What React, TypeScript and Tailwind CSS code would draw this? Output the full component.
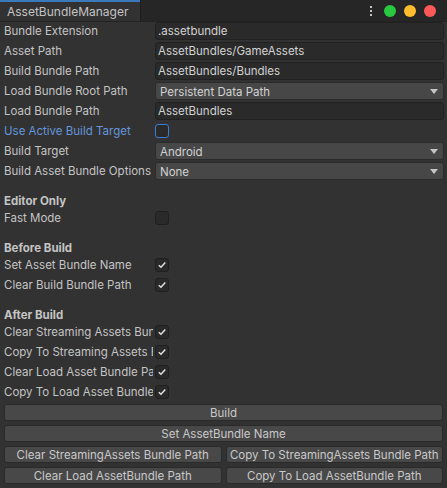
import React from "react";

const labelCls = "w-[149px] mr-[2px] shrink-0 h-[18px] leading-[19px] overflow-hidden whitespace-nowrap text-[#c4c4c4]";

const Check = ({ on, focus }: { on?: boolean; focus?: boolean }) => (
  <div
    className={`w-[14px] h-[14px] mt-[2px] rounded-[3px] border bg-[#2a2a2a] flex items-center justify-center ${
      focus ? "border-[#3c7fd2]" : "border-[#1f1f1f]"
    }`}
  >
    {on && (
      <svg width="10" height="10" viewBox="0 0 10 10">
        <path d="M1.8 5.2 L4 7.3 L8.3 2.6" fill="none" stroke="#e0e0e0" strokeWidth="1.5" />
      </svg>
    )}
  </div>
);

const TextRow = ({ label, value }: { label: string; value: string }) => (
  <div className="flex h-[20px]">
    <div className={labelCls}>{label}</div>
    <div className="flex-1 h-[18px] rounded-[3px] border border-[#212121] bg-[#2a2a2a] px-[2px] leading-[17px] text-[#d2d2d2] whitespace-nowrap overflow-hidden">
      {value}
    </div>
  </div>
);

const DropRow = ({ label, value }: { label: string; value: string }) => (
  <div className="flex h-[20px]">
    <div className={labelCls}>{label}</div>
    <div className="flex-1 h-[18px] rounded-[3px] border border-[#2b2b2b] bg-[#474747] pl-[4px] pr-[5px] flex items-center justify-between text-[#d2d2d2]">
      <span className="leading-[16px] pt-[1px]">{value}</span>
      <svg width="8" height="5" viewBox="0 0 8 5">
        <path d="M0 0 H8 L4 5 Z" fill="#c4c4c4" />
      </svg>
    </div>
  </div>
);

const CheckRow = ({ label, on, focus, blue }: { label: string; on?: boolean; focus?: boolean; blue?: boolean }) => (
  <div className="flex h-[20px]">
    <div className={`${labelCls} ${blue ? "!text-[#6496da]" : ""}`}>{label}</div>
    <Check on={on} focus={focus} />
  </div>
);

const Header = ({ title }: { title: string }) => (
  <div className="mt-[10px] h-[17px] leading-[19px] font-bold text-[#c4c4c4]">{title}</div>
);

const Btn = ({ children }: { children: React.ReactNode }) => (
  <button className="flex-1 h-[17px] rounded-[3px] border border-[#2a2a2a] bg-[#484848] text-[#c8c8c8] leading-[16px] text-center whitespace-nowrap overflow-hidden">
    {children}
  </button>
);

export default function App() {
  return (
    <div className="w-[447px] h-[488px] bg-[#323232] overflow-hidden text-[11.5px] font-['Inter',sans-serif]">
      {/* title bar */}
      <div className="h-[22px] bg-[#262626] flex border-b border-[#222222]">
        <div className="w-[140px] bg-[#323232] border-t-2 border-[#3a79bb] pl-[7px] leading-[20px] text-[#c4c4c4] text-[12px]">
          AssetBundleManager
        </div>
        <div className="w-px bg-[#1c1c1c]" />
        <div className="flex-1" />
        <div className="flex items-center pr-[11px]">
          <div className="flex flex-col gap-[2px] mr-[12px]">
            <span className="w-[2px] h-[2px] bg-[#c4c4c4]" />
            <span className="w-[2px] h-[2px] bg-[#c4c4c4]" />
            <span className="w-[2px] h-[2px] bg-[#c4c4c4]" />
          </div>
          <span className="w-[12px] h-[12px] rounded-full bg-[#28c840]" />
          <span className="w-[12px] h-[12px] rounded-full bg-[#febc2e] ml-[8px]" />
          <span className="w-[12px] h-[12px] rounded-full bg-[#ff5858] ml-[8px]" />
        </div>
      </div>

      <div className="pl-[4px] pr-[3px]">
        <TextRow label="Bundle Extension" value=".assetbundle" />
        <TextRow label="Asset Path" value="AssetBundles/GameAssets" />
        <TextRow label="Build Bundle Path" value="AssetBundles/Bundles" />
        <DropRow label="Load Bundle Root Path" value="Persistent Data Path" />
        <TextRow label="Load Bundle Path" value="AssetBundles" />
        <CheckRow label="Use Active Build Target" focus blue />
        <DropRow label="Build Target" value="Android" />
        <DropRow label="Build Asset Bundle Options" value="None" />

        <Header title="Editor Only" />
        <CheckRow label="Fast Mode" />

        <Header title="Before Build" />
        <CheckRow label="Set Asset Bundle Name" on />
        <CheckRow label="Clear Build Bundle Path" on />

        <Header title="After Build" />
        <CheckRow label="Clear Streaming Assets Bundle Path" on />
        <CheckRow label="Copy To Streaming Assets Bundle Path" on />
        <CheckRow label="Clear Load Asset Bundle Path" on />
        <CheckRow label="Copy To Load Asset Bundle Path" on />
      </div>

      <div className="mt-[1px] pl-[4px] pr-[4px] flex flex-col gap-[4px]">
        <div className="flex">
          <Btn>Build</Btn>
        </div>
        <div className="flex">
          <Btn>Set AssetBundle Name</Btn>
        </div>
        <div className="flex gap-[4px]">
          <Btn>Clear StreamingAssets Bundle Path</Btn>
          <Btn>Copy To StreamingAssets Bundle Path</Btn>
        </div>
        <div className="flex gap-[4px]">
          <Btn>Clear Load AssetBundle Path</Btn>
          <Btn>Copy To Load AssetBundle Path</Btn>
        </div>
      </div>
    </div>
  );
}
